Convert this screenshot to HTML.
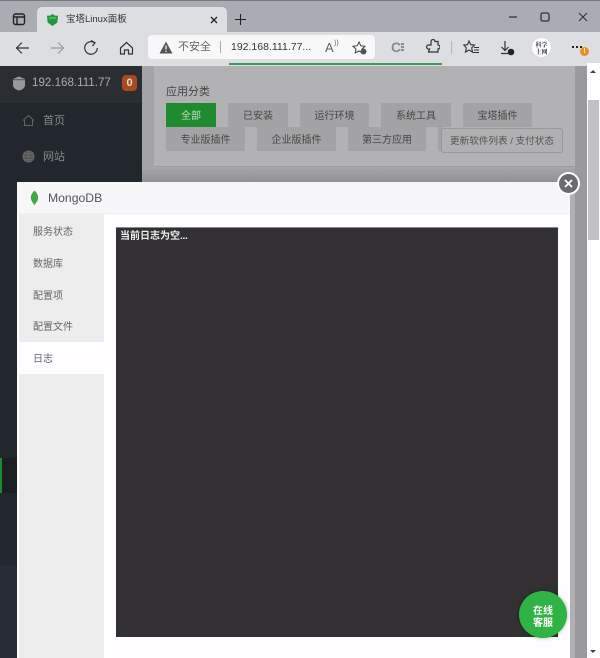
<!DOCTYPE html>
<html><head><meta charset="utf-8">
<style>
html,body{margin:0;padding:0;background:#fff}
#r{position:relative;width:600px;height:658px;overflow:hidden;font-family:"Liberation Sans","Noto Sans CJK SC",sans-serif;background:#b0afb1}
#r div,#r svg{position:absolute;display:block}
.t{white-space:nowrap;line-height:1}
.b{background:#a3a2a4;color:#474747;font-size:10px;text-align:center;height:24px;line-height:27px;white-space:nowrap}
.n{left:19px;width:85px;height:32px;line-height:35px;font-size:10px;color:#666;text-indent:14px;white-space:nowrap}
</style></head><body>
<div id="r">
<!-- tab strip -->
<div style="left:0;top:0;width:600px;height:32px;background:#a9adb3"></div>
<div style="left:0;top:0;width:600px;height:1px;background:#74787c"></div>
<div style="left:37px;top:7px;width:190px;height:26px;background:#dcdee1;border-radius:5px 5px 0 0"></div>
<svg style="left:12px;top:12px" width="14" height="14" viewBox="0 0 14 14" fill="none" stroke="#222" stroke-width="1.4"><rect x="1.5" y="2" width="11" height="10.5" rx="2"/><path d="M1.5 5H12.5M5 5V12.5"/></svg>
<svg style="left:46px;top:13px" width="13" height="14" viewBox="0 0 13 14"><path d="M6.5 1L9 2.6H12L11.4 9.5L6.5 13L1.6 9.5L1 2.6H4Z" fill="#1f9a3c"/><path d="M3 5H10" stroke="#7fd08f" stroke-width="1"/></svg>
<div class="t" style="left:66px;top:15px;font-size:9.500px;color:#333">宝塔Linux面板</div>
<svg style="left:209px;top:15px" width="10" height="10" viewBox="0 0 10 10" stroke="#222" stroke-width="1.3"><path d="M2 2L8 8M8 2L2 8"/></svg>
<svg style="left:234px;top:13px" width="13" height="13" viewBox="0 0 13 13" stroke="#222" stroke-width="1.1"><path d="M6.5 1V12M1 6.5H12"/></svg>
<svg style="left:505px;top:11px" width="90" height="12" viewBox="0 0 90 12" fill="none" stroke="#333" stroke-width="1.1"><path d="M4 6H12" stroke-width="1.3"/><rect x="36" y="2" width="8" height="8" rx="1.5" stroke-width="1.3"/><path d="M74 2L82 10M82 2L74 10"/></svg>
<!-- toolbar -->
<div style="left:0;top:32px;width:600px;height:31px;background:#dcdee1"></div>
<svg style="left:14px;top:39px" width="124" height="18" viewBox="0 0 124 18" fill="none" stroke="#333" stroke-width="1.2"><path d="M15 9H3M8 3.500L2.500 9L8 14.500"/><path d="M37 9H49M44 3.500L49.500 9L44 14.500" stroke="#999"/><path d="M80.500 3.700A6.300 6.300 0 1 0 83.300 9"/><path d="M77 1.500L81 3.800L78.500 7"/><path d="M106.500 9L112.500 3.500L118.500 9V15H114.500V11H110.500V15H106.500Z"/></svg>
<div style="left:148px;top:35px;width:227px;height:24px;background:#f8f8f9;border-radius:4px"></div>
<svg style="left:159px;top:41px" width="14" height="13" viewBox="0 0 14 13"><path d="M7 0.500L13.500 12.500H0.500Z" fill="#555"/><path d="M7 4.500V8.500M7 9.700V11" stroke="#fff" stroke-width="1.200"/></svg>
<div class="t" style="left:178px;top:42px;font-size:11px;color:#666">不安全</div>
<div style="left:220px;top:41px;width:1px;height:12px;background:#aaa"></div>
<div class="t" style="left:231px;top:42px;font-size:10.500px;color:#333">192.168.111.77...</div>
<div class="t" style="left:325px;top:41px;font-size:13px;color:#666">A</div>
<div class="t" style="left:334px;top:40px;font-size:7px;color:#666">))</div>
<svg style="left:352px;top:41px" width="16" height="14" viewBox="0 0 16 14"><path d="M7 1L8.800 4.800L13 5.300L10 8L10.800 12L7 10L3.200 12L4 8L1 5.300L5.200 4.800Z" fill="none" stroke="#444" stroke-width="1"/><circle cx="11.500" cy="10.500" r="3" fill="#555"/></svg>
<div class="t" style="left:391px;top:40px;font-size:14px;font-weight:bold;color:#8a8c8f">C</div>
<div style="left:401px;top:43px;width:3px;height:2px;background:#8a8c8f;box-shadow:0 3px #8a8c8f,0 6px #8a8c8f"></div>
<svg style="left:426px;top:39px" width="14" height="15" viewBox="0 0 14 15" fill="none" stroke="#333" stroke-width="1.200"><path d="M5 2.500A2 2 0 0 1 9 2.500H12V6A2 2 0 0 1 12 10V13H2.500L3.500 10A2 2 0 0 1 2 6H5Z"/></svg>
<div style="left:451px;top:41px;width:1px;height:13px;background:#b4b6b8"></div>
<svg style="left:463px;top:40px" width="16" height="14" viewBox="0 0 16 14" fill="none" stroke="#333" stroke-width="1.100"><path d="M6 1L7.700 4.700L11.500 5L8.700 7.800L9.500 12L6 10L2.500 12L3.300 7.800L0.700 5L4.500 4.700Z"/><path d="M11 7.500H16M11 10H16M10 12.500H16"/></svg>
<svg style="left:500px;top:40px" width="15" height="16" viewBox="0 0 15 16" fill="none" stroke="#333" stroke-width="1.200"><path d="M5 1V10M1.500 7L5 10.500L8.500 7M1 13.500H8"/><circle cx="11" cy="12" r="3.300" fill="#222" stroke="none"/></svg>
<div style="left:532px;top:38px;width:19px;height:19px;border-radius:50%;background:#fff"></div>
<div class="t" style="left:532px;top:41px;width:19px;text-align:center;font-size:6px;line-height:7px;color:#333;font-family:'Noto Serif CJK SC',serif;font-weight:bold;white-space:normal">科学<br>上网</div>
<div style="left:572px;top:46px;width:2.400px;height:2.400px;background:#222;box-shadow:4px 0 #222,8px 0 #222"></div>
<div style="left:580px;top:47px;width:9px;height:9px;border-radius:50%;background:#e8921d;color:#fff;font-size:7px;line-height:9px;text-align:center;font-weight:bold">!</div>
<div style="left:0;top:63px;width:600px;height:3px;background:#dcdee1"></div>
<!-- sidebar -->
<div style="left:0;top:66px;width:142px;height:592px;background:#22272e"></div>
<div style="left:0;top:565px;width:142px;height:93px;background:#272c36"></div>
<div style="left:0;top:66px;width:142px;height:37px;background:#2a2e33"></div>
<svg style="left:12px;top:76px" width="14" height="15" viewBox="0 0 14 15"><path d="M1 3L7 0.500L13 3V9C13 12 10 14 7 14.500C4 14 1 12 1 9Z" fill="#999"/><path d="M1 3.700H13" stroke="#555"/></svg>
<div class="t" style="left:32px;top:77px;font-size:11.600px;color:#aaa">192.168.111.77</div>
<div style="left:122px;top:75px;width:15px;height:16px;border-radius:4px;background:#a84a1c;color:#ddd;font-size:11px;font-weight:bold;line-height:16px;text-align:center">0</div>
<svg style="left:22px;top:114px" width="13" height="13" viewBox="0 0 13 13" fill="none" stroke="#666"><path d="M1 6.500L6.500 1.500L12 6.500M2.500 6V11.500H10.500V6"/></svg>
<div class="t" style="left:43px;top:116px;font-size:11px;color:#888">首页</div>
<svg style="left:22px;top:150px" width="13" height="13" viewBox="0 0 13 13" fill="none" stroke="#666"><circle cx="6.500" cy="6.500" r="5.500" fill="#555"/><path d="M1 6.500H12M6.500 1V12M2 3.500H11M2 9.500H11"/></svg>
<div class="t" style="left:43px;top:152px;font-size:11px;color:#888">网站</div>
<div style="left:0;top:458px;width:17px;height:35px;background:#1b1e22"></div>
<div style="left:0;top:458px;width:2px;height:35px;background:#1c8a2e"></div>
<!-- content -->
<div style="left:142px;top:66px;width:12px;height:592px;background:#a4a4a6"></div>
<div style="left:154px;top:66px;width:421px;height:101px;background:#b2b1b3"></div>
<div style="left:154px;top:166px;width:421px;height:1px;background:#9d9d9f"></div>
<div style="left:142px;top:167px;width:433px;height:15px;background:linear-gradient(#a8a8aa,#909092)"></div>
<div style="left:229px;top:63px;width:213px;height:2px;background:#3e9a57"></div>
<div style="left:575px;top:66px;width:12px;height:592px;background:#9a9a9c"></div>
<div class="t" style="left:166px;top:87px;font-size:11px;color:#444">应用分类</div>
<div class="b" style="left:166px;top:103px;width:50px;background:#1f8a30;color:#bfe0c4">全部</div>
<div class="b" style="left:228px;top:103px;width:60px">已安装</div>
<div class="b" style="left:300px;top:103px;width:69px">运行环境</div>
<div class="b" style="left:381px;top:103px;width:70px">系统工具</div>
<div class="b" style="left:463px;top:103px;width:69px">宝塔插件</div>
<div class="b" style="left:166px;top:127px;width:79px">专业版插件</div>
<div class="b" style="left:257px;top:127px;width:79px">企业版插件</div>
<div class="b" style="left:348px;top:127px;width:78px">第三方应用</div>
<div style="left:438px;top:127px;width:4px;height:24px;background:#a3a2a4"></div>
<div style="left:441px;top:128px;width:120px;height:23px;border:1px solid #999;border-radius:3px;background:#b0afb1;color:#555;font-size:9.600px;line-height:26px;text-align:center;white-space:nowrap">更新软件列表 / 支付状态</div>
<!-- scrollbar -->
<div style="left:587px;top:63px;width:13px;height:595px;background:#fff"></div>
<div style="left:588px;top:100px;width:11px;height:140px;background:#c2c2c4"></div>
<div style="left:590px;top:70px;width:0;height:0;border-left:3px solid transparent;border-right:3px solid transparent;border-bottom:3px solid #444"></div>
<div style="left:590px;top:650px;width:0;height:0;border-left:3px solid transparent;border-right:3px solid transparent;border-top:3px solid #444"></div>
<!-- modal -->
<div style="left:17px;top:182px;width:553px;height:476px;background:#fefdff"></div>
<div style="left:17px;top:182px;width:553px;height:32px;background:#f7f6f9;border-bottom:1px solid #f0f0f2;box-sizing:border-box"></div>
<svg style="left:30px;top:190px" width="9" height="16" viewBox="0 0 9 16"><path d="M4.500 0.500C7.500 3.500 8.500 6 8 9C7.500 11.500 5.500 13 4.500 15.500C3.500 13 1.500 11.500 1 9C0.500 6 1.500 3.500 4.500 0.500Z" fill="#3fa844"/></svg>
<div class="t" style="left:48px;top:192px;font-size:12.200px;color:#555">MongoDB</div>
<div style="left:19px;top:214px;width:85px;height:444px;background:#eeedee"></div>
<div class="n" style="top:215px">服务状态</div>
<div class="n" style="top:247px">数据库</div>
<div class="n" style="top:279px">配置项</div>
<div class="n" style="top:310px">配置文件</div>
<div class="n" style="top:342px;background:#fefdff">日志</div>
<div style="left:116px;top:227px;width:442px;height:410px;background:#323032;border-top:1px solid #888;box-sizing:border-box"></div>
<div class="t" style="left:120px;top:231px;font-size:10px;line-height:12px;color:#eee;font-weight:bold">当前日志为空<span style="letter-spacing:-0.300px">...</span></div>
<!-- close -->
<div style="left:557px;top:172px;width:23px;height:23px;border-radius:50%;background:#fff"></div>
<div style="left:559px;top:174px;width:19px;height:19px;border-radius:50%;background:#6b6a6c"></div>
<svg style="left:564px;top:179px" width="9" height="9" viewBox="0 0 9 9" stroke="#fff" stroke-width="1.800"><path d="M1 1L8 8M8 1L1 8"/></svg>
<!-- chat -->
<div style="left:519px;top:591px;width:48px;height:47px;border-radius:50%;background:#2eb344;box-shadow:0 0 4px rgba(0,0,0,.3)"></div>
<div class="t" style="left:519px;top:606px;width:48px;text-align:center;font-size:10px;line-height:12px;color:#fff;font-weight:bold">在线<br>客服</div>
</div>
</body></html>
